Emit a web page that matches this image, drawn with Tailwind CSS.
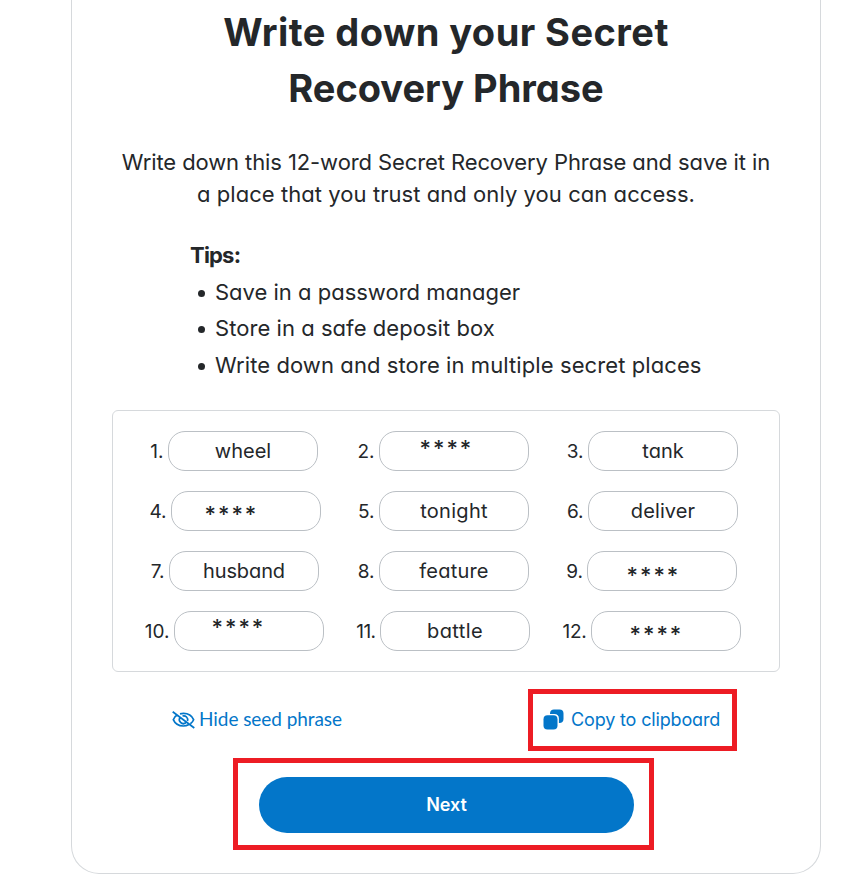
<!DOCTYPE html>
<html lang="en">
<head>
<meta charset="utf-8">
<title>Secret Recovery Phrase</title>
<script src="https://cdn.jsdelivr.net/npm/@tailwindcss/browser@4"></script>
</head>
<body class="h-[891px] overflow-hidden bg-white font-[Inter,sans-serif] text-[#24272a] [font-feature-settings:'cv11']">
<main class="ml-[71px] flex h-[874px] w-[750px] flex-col items-center rounded-b-[28px] border-x border-b border-[#d6d9dc] pt-1">
  <h1 class="text-center text-[38px] leading-[56px] font-bold whitespace-nowrap"><span class="tracking-[0.45px]">Write down your Secret</span><br><span>Recovery Phrase</span></h1>
  <p class="mt-[30px] text-center text-[22px] leading-8 whitespace-nowrap"><span class="tracking-[-0.1px]">Write down this 12-word Secret Recovery Phrase and save it in</span><br><span class="tracking-[0.06px]">a place that you trust and only you can access.</span></p>
  <section class="mt-[27px] ml-[118px] self-start text-[22px] leading-[36.5px] whitespace-nowrap">
    <h2 class="font-bold tracking-[-0.8px]">Tips:</h2>
    <ul>
      <li class="flex items-center gap-[10px] pl-[8px]"><i class="mt-[3px] size-[7px] rounded-full bg-[#24272a]"></i><span>Save in a password manager</span></li>
      <li class="flex items-center gap-[10px] pl-[8px]"><i class="mt-[3px] size-[7px] rounded-full bg-[#24272a]"></i><span class="tracking-[0.05px]">Store in a safe deposit box</span></li>
      <li class="flex items-center gap-[10px] pl-[8px]"><i class="mt-[3px] size-[7px] rounded-full bg-[#24272a]"></i><span class="tracking-[0.09px]">Write down and store in multiple secret places</span></li>
    </ul>
  </section>
  <section class="mt-[27px] grid h-[262px] w-[668px] shrink-0 auto-rows-[40px] grid-cols-[208px_211px_206px] content-start gap-y-5 rounded-md border border-[#d6d9dc] pt-5 pl-[17px] text-[20px] leading-[38px]">
    <div class="flex justify-center"><span class="flex w-[18px] justify-end pr-[4.5px] text-[19px] leading-[41px]">1.</span><div class="h-10 w-[150px] rounded-[17px] border border-[#bbc0c5] text-center">wheel</div></div>
    <div class="flex justify-center"><span class="flex w-[21px] justify-end pr-[4.5px] text-[19px] leading-[41px]">2.</span><div class="h-10 w-[150px] rounded-[17px] border border-[#bbc0c5] pl-[39.5px] text-[22px] leading-8 font-medium tracking-[2px]">****</div></div>
    <div class="flex justify-center"><span class="flex w-[22px] justify-end pr-[4.5px] text-[19px] leading-[41px]">3.</span><div class="h-10 w-[150px] rounded-[17px] border border-[#bbc0c5] text-center">tank</div></div>
    <div class="flex justify-center"><span class="flex w-[24px] justify-end pr-[4.5px] text-[19px] leading-[41px]">4.</span><div class="h-10 w-[150px] rounded-[17px] border border-[#bbc0c5] pt-[3px] pl-[32.5px] text-[22px] font-medium tracking-[2px]">****</div></div>
    <div class="flex justify-center"><span class="flex w-[21px] justify-end pr-[4.5px] text-[19px] leading-[41px]">5.</span><div class="h-10 w-[150px] rounded-[17px] border border-[#bbc0c5] text-center tracking-[0.3px]">tonight</div></div>
    <div class="flex justify-center"><span class="flex w-[22px] justify-end pr-[4.5px] text-[19px] leading-[41px]">6.</span><div class="h-10 w-[150px] rounded-[17px] border border-[#bbc0c5] text-center tracking-[0.1px]">deliver</div></div>
    <div class="flex justify-center"><span class="flex w-[20px] justify-end pr-[4.5px] text-[19px] leading-[41px]">7.</span><div class="h-10 w-[150px] rounded-[17px] border border-[#bbc0c5] text-center tracking-[-0.1px]">husband</div></div>
    <div class="flex justify-center"><span class="flex w-[21px] justify-end pr-[4.5px] text-[19px] leading-[41px]">8.</span><div class="h-10 w-[150px] rounded-[17px] border border-[#bbc0c5] text-center tracking-[0.2px]">feature</div></div>
    <div class="flex justify-center"><span class="flex w-[20px] justify-end pr-[4px] text-[19px] leading-[41px]">9.</span><div class="h-10 w-[150px] rounded-[17px] border border-[#bbc0c5] pt-1 pl-[38.5px] text-[22px] font-medium tracking-[2px]">****</div></div>
    <div class="flex justify-center"><span class="flex w-[30px] justify-end pr-[4.5px] text-[19px] leading-[41px]">10.</span><div class="h-10 w-[150px] rounded-[17px] border border-[#bbc0c5] pl-[36.5px] text-[22px] leading-[30px] font-medium tracking-[2px]">****</div></div>
    <div class="flex justify-center"><span class="flex w-[23px] justify-end pr-[4.5px] text-[19px] leading-[41px] tracking-[-0.6px]">11.</span><div class="h-10 w-[150px] rounded-[17px] border border-[#bbc0c5] text-center tracking-[0.4px]">battle</div></div>
    <div class="flex justify-center"><span class="flex w-[28px] justify-end pr-[4.5px] text-[19px] leading-[41px] tracking-[-0.3px]">12.</span><div class="h-10 w-[150px] rounded-[17px] border border-[#bbc0c5] pt-[3px] pl-[37.5px] text-[22px] font-medium tracking-[2px]">****</div></div>
  </section>
  <div class="mt-[17px] ml-[100px] flex h-[62px] w-[565px] shrink-0 items-center justify-between self-start whitespace-nowrap text-[#0376c9]">
    <a class="mb-px flex items-center gap-[4px] font-[Lato,sans-serif] text-[19px] tracking-[-0.06px]">
      <svg class="h-[18px] w-[23px]" viewBox="0 0 23 18" fill="none" stroke="#0376c9" stroke-width="1.7"><path d="M5.200 3.800C3.400 5 2 6.800 1.300 8.700c1.600 3.800 5.500 6.300 10.100 6.300 1.900 0 3.700-.4 5.200-1.200M8 2.900C9.100 2.600 10.300 2.400 11.500 2.400c4.600 0 8.500 2.500 10.100 6.300-.6 1.600-1.700 2.900-3.200 4M8.200 6.200a4 4 0 0 0 5.600 5.600M10.500 5a4 4 0 0 1 5 5.100M.7.800l21.600 16.200"/></svg><span>Hide seed phrase</span></a>
    <a class="flex h-[62px] w-[209px] items-center gap-[7px] border-[5px] border-[#ed1c24] pl-[10px] text-[18px] tracking-[-0.15px]">
      <svg class="mb-px size-[21px]" viewBox="0 0 21 21" fill="#0376c9"><path d="M11 .5h5.500a4 4 0 0 1 4 4V10c0 2.400-1.600 4-4 4h-.6V9.500c0-3-1.600-4.600-4.600-4.600H7v-.4c0-2.400 1.600-4 4-4Z"/><rect x=".5" y="6.200" width="14" height="14.300" rx="4"/></svg><span class="mb-px">Copy to clipboard</span></a>
  </div>
  <div class="mt-[7px] ml-[-5px] flex h-[92px] w-[421px] shrink-0 items-center justify-center border-[5px] border-[#ed1c24] pt-px pl-[6px]">
    <button class="h-14 w-[375px] rounded-full bg-[#0376c9] pb-px text-[18px] font-semibold tracking-[-0.1px] text-white">Next</button>
  </div>
</main>
</body>
</html>
